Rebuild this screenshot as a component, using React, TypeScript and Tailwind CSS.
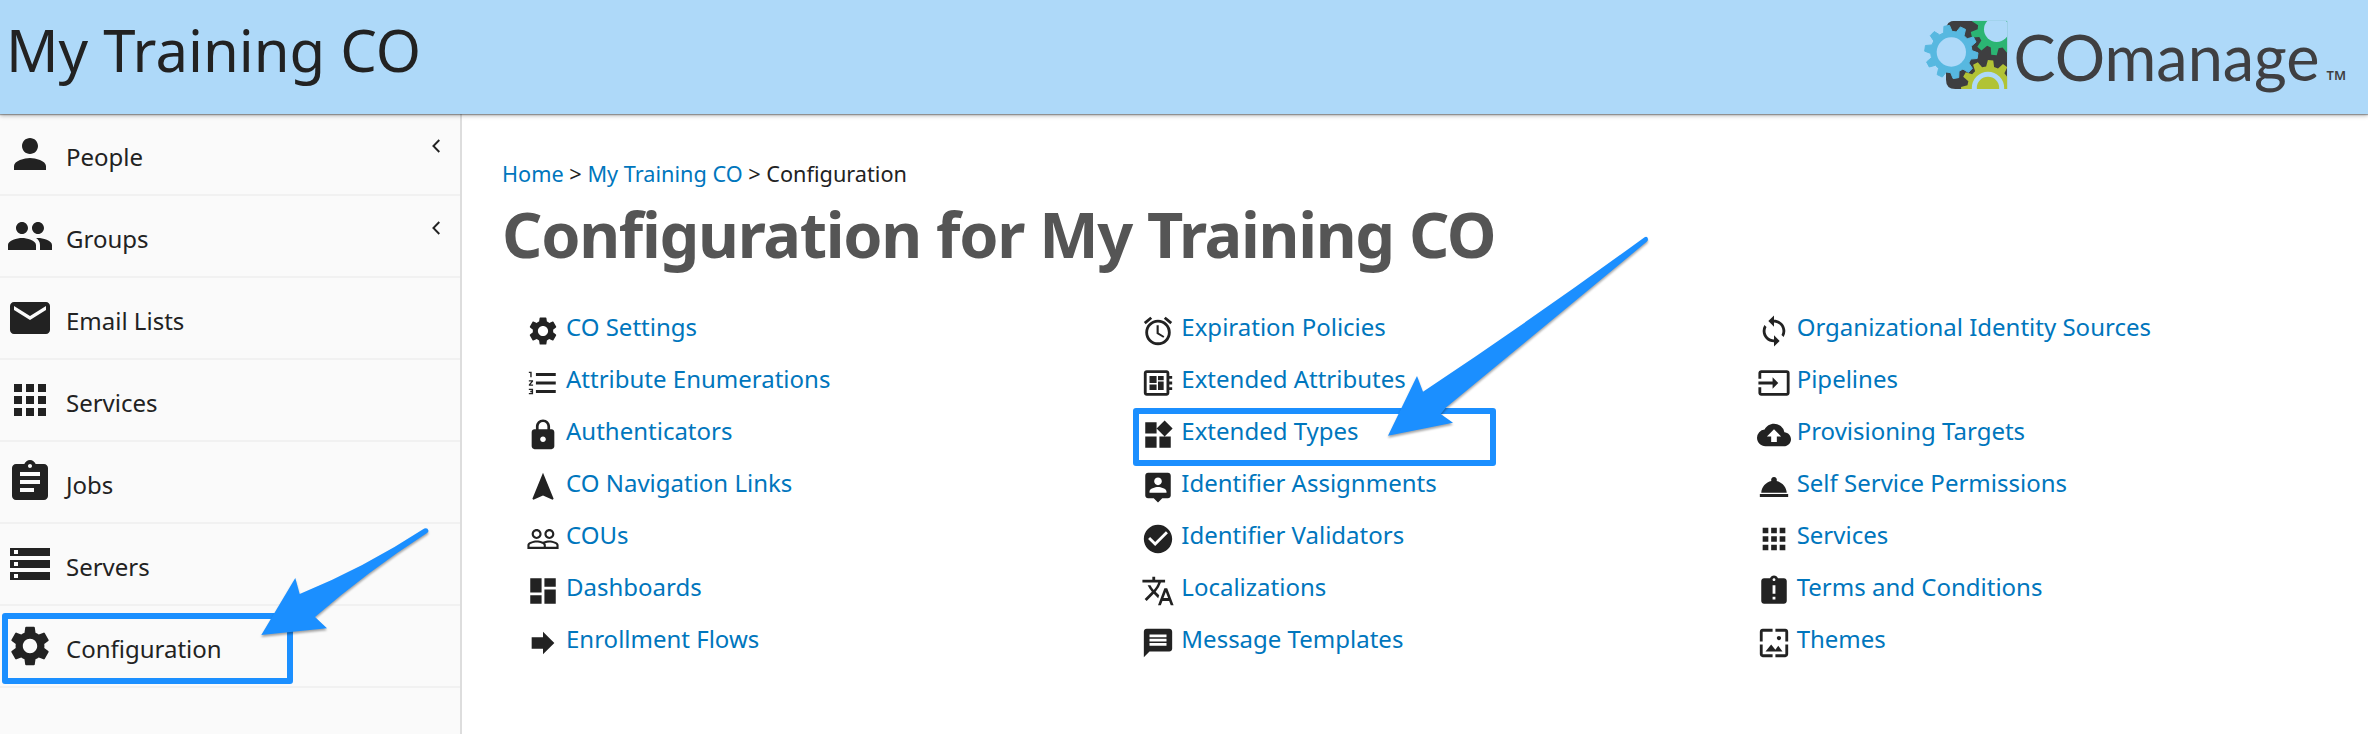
import type { IconType } from "react-icons";
import {
  MdAlarm,
  MdApps,
  MdAssignment,
  MdAssignmentLate,
  MdBackup,
  MdCheckCircle,
  MdDashboard,
  MdDeveloperBoard,
  MdEmail,
  MdForward,
  MdFormatListNumbered,
  MdInput,
  MdLock,
  MdLoop,
  MdMessage,
  MdNavigation,
  MdPeople,
  MdPeopleOutline,
  MdPerson,
  MdRoomService,
  MdSettings,
  MdStorage,
  MdTranslate,
  MdWallpaper,
  MdWidgets,
} from "react-icons/md";

function PersonPin({ className }: { className?: string }) {
  return (
    <svg viewBox="0 0 24 24" fill="currentColor" className={className}>
      <path d="M19 2H5c-1.11 0-2 .9-2 2v14c0 1.1.89 2 2 2h4l3 3 3-3h4c1.1 0 2-.9 2-2V4c0-1.1-.9-2-2-2zm-7 3.3c1.49 0 2.7 1.21 2.7 2.7 0 1.49-1.21 2.7-2.7 2.7-1.49 0-2.7-1.21-2.7-2.7 0-1.49 1.21-2.7 2.7-2.7zM18 16H6v-.9c0-2 4-3.1 6-3.1s6 1.1 6 3.1v.9z" />
    </svg>
  );
}

type Item = { label: string; icon: IconType | typeof PersonPin; expandable?: boolean };

const menu: Item[] = [
  { label: "People", icon: MdPerson, expandable: true },
  { label: "Groups", icon: MdPeople, expandable: true },
  { label: "Email Lists", icon: MdEmail },
  { label: "Services", icon: MdApps },
  { label: "Jobs", icon: MdAssignment },
  { label: "Servers", icon: MdStorage },
  { label: "Configuration", icon: MdSettings },
];

const columns: Item[][] = [
  [
    { label: "CO Settings", icon: MdSettings },
    { label: "Attribute Enumerations", icon: MdFormatListNumbered },
    { label: "Authenticators", icon: MdLock },
    { label: "CO Navigation Links", icon: MdNavigation },
    { label: "COUs", icon: MdPeopleOutline },
    { label: "Dashboards", icon: MdDashboard },
    { label: "Enrollment Flows", icon: MdForward },
  ],
  [
    { label: "Expiration Policies", icon: MdAlarm },
    { label: "Extended Attributes", icon: MdDeveloperBoard },
    { label: "Extended Types", icon: MdWidgets },
    { label: "Identifier Assignments", icon: PersonPin },
    { label: "Identifier Validators", icon: MdCheckCircle },
    { label: "Localizations", icon: MdTranslate },
    { label: "Message Templates", icon: MdMessage },
  ],
  [
    { label: "Organizational Identity Sources", icon: MdLoop },
    { label: "Pipelines", icon: MdInput },
    { label: "Provisioning Targets", icon: MdBackup },
    { label: "Self Service Permissions", icon: MdRoomService },
    { label: "Services", icon: MdApps },
    { label: "Terms and Conditions", icon: MdAssignmentLate },
    { label: "Themes", icon: MdWallpaper },
  ],
];

/* Outline of a cog: `teeth` tapered teeth between the body and tip radii. */
function gear(cx: number, cy: number, body: number, tip: number, teeth: number, start: number) {
  const points: string[] = [];
  const step = 360 / teeth;
  for (let i = 0; i < teeth; i++) {
    const mid = start + i * step;
    const corners: [number, number][] = [
      [-step * 0.33, body],
      [-step * 0.17, tip],
      [step * 0.17, tip],
      [step * 0.33, body],
    ];
    for (const [offset, radius] of corners) {
      const a = ((mid + offset) * Math.PI) / 180;
      points.push(`${(cx + radius * Math.cos(a)).toFixed(1)},${(cy + radius * Math.sin(a)).toFixed(1)}`);
    }
  }
  return `M${points.join("L")}Z`;
}

function Logo() {
  return (
    <div className="flex h-[82px] w-[448px] items-start">
      <svg viewBox="0 0 300 246" className="h-[82px] w-[100px] shrink-0">
        <defs>
          <clipPath id="tile">
            <path d="M106 20H262V225H106Q78 225 78 197V48Q78 20 106 20Z" />
          </clipPath>
        </defs>
        <g clipPath="url(#tile)">
          <rect x="78" y="20" width="184" height="205" fill="#3e3e40" />
          <path d={gear(230, 46, 57, 78, 10, 24)} fill="#2bb573" />
          <circle cx="230" cy="46" r="38" fill="#aed9f9" />
          <path d={gear(206, 221, 64, 83, 11, 274)} fill="#b1c335" />
          <circle cx="204" cy="222" r="41" fill="none" stroke="#aed9f9" strokeWidth="15" />
        </g>
        <path
          d={gear(94, 114, 62, 80, 10, 8)}
          fill="#57b8e0"
          stroke="#57b8e0"
          strokeWidth="3"
          strokeLinejoin="round"
        />
        <circle cx="94" cy="114" r="44" fill="#aed9f9" />
      </svg>
      <span className="-ml-[6.5px] w-[304px] font-['Lato',sans-serif] text-[63px] leading-[85px] text-[#3f3f41]">
        COmanage
      </span>
      <span className="ml-[9px] text-[13px] leading-[122px] font-semibold text-[#3f3f41]">TM</span>
    </div>
  );
}

function Annotations() {
  return (
    <>
      <div className="absolute top-[613px] left-[2px] h-[71px] w-[291px] rounded-[3px] border-[6px] border-[#1b8fff]" />
      <div className="absolute top-[408px] left-[1133px] h-[58px] w-[363px] rounded-[3px] border-[6px] border-[#1b8fff]" />
      <svg
        viewBox="0 0 2368 734"
        className="absolute top-0 left-0 h-[734px] w-[2368px] fill-[#1b8fff] drop-shadow-[0_2px_1px_rgba(0,0,0,0.35)]"
      >
        <path d="M261.3 635L295.3 578L299.7 594Q364 568 424.3 528.6Q427.6 527.4 428.4 530.4Q428.6 532 427 533Q368 571 315 617L327 628.3Z" />
        <path d="M1388 435.7L1417 376L1423 391.7Q1531 320 1644.6 237.2Q1647.4 236 1648 239Q1648 240.6 1647 241.6L1445.7 407.7L1440.7 414L1453 422.7Z" />
      </svg>
    </>
  );
}

export default function App() {
  return (
    <div className="relative flex h-[734px] w-[2368px] flex-col overflow-hidden bg-white font-['Noto_Sans',sans-serif] text-[#222]">
      <header className="z-10 flex h-[114px] shrink-0 items-start justify-between bg-[#aed9f9] pl-[6px] shadow-[0_1px_1px_rgba(0,0,0,0.3),0_2px_4px_rgba(0,0,0,0.25)]">
        <div className="text-[58px] leading-[100px]">My Training CO</div>
        <div className="pt-[14px]">
          <Logo />
        </div>
      </header>

      <div className="flex flex-1">
        <nav className="w-[462px] shrink-0 border-r-2 border-[#ddd] bg-[#fafafa]">
          {menu.map(({ label, icon: Icon, expandable }) => (
            <div key={label} className="flex h-[82px] items-center border-b-2 border-[#f1f1f1] pl-[6px]">
              <Icon className="size-[48px] shrink-0" />
              <span className="ml-[12px] flex-1 pt-[5px] text-[24px] leading-[36px]">{label}</span>
              {expandable && (
                <svg viewBox="0 0 10 14" className="mr-[19px] mb-[16px] h-[14px] w-[10px]">
                  <path d="M8.3 1L2.4 7l5.9 6" fill="none" stroke="#222" strokeWidth="1.9" />
                </svg>
              )}
            </div>
          ))}
        </nav>

        <main className="flex-1 pt-[44px] pl-[40px]">
          <div className="text-[21.7px] leading-[32px]">
            <a className="text-[#0076bd]">Home</a> &gt; <a className="text-[#0076bd]">My Training CO</a> &gt; Configuration
          </div>
          <h1 className="mt-[12px] text-[63px] leading-[64px] font-bold tracking-[-1.3px] text-[#555]">
            Configuration for My Training CO
          </h1>
          <div className="mt-[35px] ml-[24px] grid grid-cols-[615.33px_615.33px_580px]">
            {columns.map((items, i) => (
              <ul key={i}>
                {items.map(({ label, icon: Icon }) => (
                  <li key={label} className="flex h-[52px] items-center gap-[6px]">
                    <Icon className="mt-[8px] size-[34px] shrink-0" />
                    <a className="text-[24px] leading-[36px] text-[#0076bd]">{label}</a>
                  </li>
                ))}
              </ul>
            ))}
          </div>
        </main>
      </div>
      <Annotations />
    </div>
  );
}
